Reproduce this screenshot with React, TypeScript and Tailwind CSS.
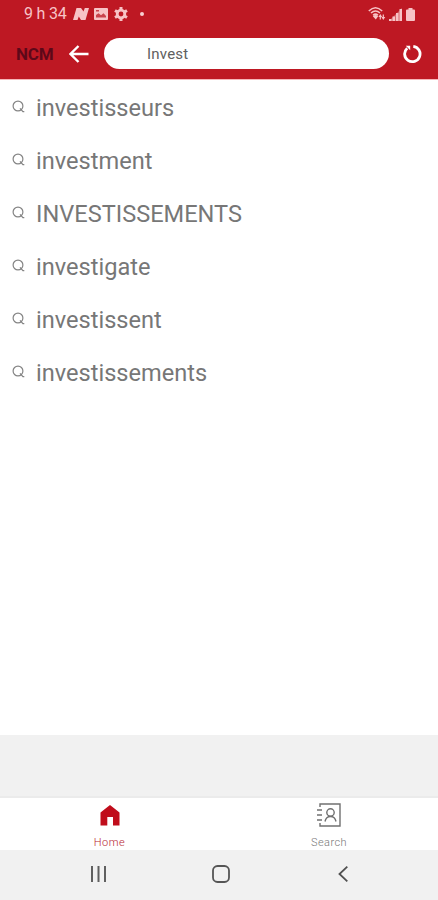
const suggestions = [
  "investisseurs",
  "investment",
  "INVESTISSEMENTS",
  "investigate",
  "investissent",
  "investissements",
];

function StatusBar() {
  return (
    <div className="flex h-7 items-center justify-between pl-6 pr-[23px] text-[#f7c3c6]">
      <div className="flex items-center">
        <span className="w-[49px] whitespace-nowrap text-[16px] leading-7 tracking-[-0.2px]">9 h 34</span>
        <svg className="h-3 w-4" viewBox="0 0 16 12" fill="currentColor">
          <path d="M3.500 0H8l2.500 3.500L11.800 0H16l-3.500 12H8L5.800 8.500 4.500 12H0z" />
        </svg>
        <svg className="ml-[5px] h-3 w-3.5" viewBox="0 0 14 12">
          <rect width="14" height="12" rx="1" fill="currentColor" />
          <path d="M2 9.500V7l2.500-1.800 2.500 2 2.500-2L12 8v1.500z" fill="#c9434c" />
          <rect x="2" y="2" width="3" height="1.500" fill="#c9434c" />
        </svg>
        <svg className="ml-[6px] h-3.5 w-3.5" viewBox="0 0 14 14" fill="none" stroke="currentColor">
          <circle cx="7" cy="7" r="3.800" strokeWidth="2.800" />
          <path d="M7 0v3M7 11v3M1 3.500l2.500 1.500M10.500 9l2.500 1.500M1 10.500L3.500 9M10.500 5L13 3.500" strokeWidth="3" />
        </svg>
        <span className="ml-[12px] h-1 w-1 rounded-full bg-[#f8d0d2]" />
      </div>
      <div className="flex items-center">
        <svg className="h-4 w-[18px]" viewBox="0 0 18 16" fill="none" stroke="currentColor" strokeWidth="1.500">
          <path d="M.800 5Q7.500 -1.500 14.200 5M3 7Q7.500 3 12 7M5 9.200Q7.500 7 10 9.200" />
          <path d="M7.800 13.500L4.800 10.200Q7.500 8 10.200 10.200z" fill="currentColor" stroke="none" />
          <path d="M12.300 8l1.900 3h-3.800zM15.300 14l-1.900-3h3.800z" fill="currentColor" stroke="none" />
          <path d="M12.300 10v3.500M15.300 8.500V12" strokeWidth="1.200" />
        </svg>
        <svg className="ml-[3px] h-[13px] w-[13px]" viewBox="0 0 13 13" fill="currentColor">
          <path d="M0 13L13 0v13z" opacity="0.45" />
          <path d="M0 13V11h2.500v2zM3.500 13V8.500H6V13zM7 13V5h2.500v8zM10.500 13V1H13v12z" />
        </svg>
        <svg className="ml-[4px] h-[13px] w-[9px]" viewBox="0 0 9 13" fill="currentColor">
          <path d="M2.500 0h4v1.500H8q1 0 1 1V12q0 1-1 1H1q-1 0-1-1V2.500q0-1 1-1h1.500z" />
        </svg>
      </div>
    </div>
  );
}

function SearchIcon() {
  return (
    <svg className="h-[13px] w-[13px] shrink-0" viewBox="0 0 13 13" fill="none" stroke="#858585" strokeWidth="1.200">
      <circle cx="6" cy="6" r="4.900" />
      <path d="M8 8.300l2.900 3.400h1.400" />
    </svg>
  );
}

export default function App() {
  return (
    <div className="flex h-[900px] w-[438px] flex-col overflow-hidden bg-white font-['Roboto',sans-serif]">
      <header className="h-20 shrink-0 border-b border-[#f6b5b8] bg-[#be1823]">
        <StatusBar />
        <div className="flex h-[51px] items-center pl-4 pr-[16px]">
          <span className="w-[53px] pt-[2px] text-[17px] font-bold tracking-[-0.2px] text-[#5d0819]">NCM</span>
          <svg className="h-[18px] w-5" viewBox="0 0 20 18" fill="none" stroke="white" strokeWidth="2.400">
            <path d="M19.500 9H1.500M9.500 1L1.500 9l8 8" />
          </svg>
          <div className="ml-[15px] flex h-[31px] w-[285px] items-center rounded-full bg-white pl-[43px] pt-[2px] text-[15px] tracking-[0.2px] text-[#606060]">
            Invest
          </div>
          <svg className="ml-[13px] h-5 w-5 shrink-0" viewBox="0 0 20 20" fill="none" stroke="white">
            <path d="M11.300 2.300A7.700 7.700 0 1 1 5.200 4.200" strokeWidth="2.800" />
            <path d="M3.800 1.800h4.400v4.400z" fill="white" stroke="none" />
          </svg>
        </div>
      </header>

      <ul className="flex-1">
        {suggestions.map((item) => (
          <li key={item} className="flex h-[53px] items-center gap-[11px] pl-3 text-[23.6px] text-[#777]">
            <SearchIcon />
            <span className="pt-1">{item}</span>
          </li>
        ))}
      </ul>

      <div className="h-[63px] shrink-0 border-b-2 border-[#ebebeb] bg-[#f1f1f1]" />

      {/* Tabs */}
      <nav className="flex h-[52px] shrink-0 bg-white text-[11px] font-light leading-[14px]">
        <div className="flex flex-1 flex-col items-center pt-[5px] text-[#b81c30]">
          <svg className="mt-[2px] h-[21px] w-5" viewBox="0 0 20 21">
            <path d="M10 0L19.500 7.500V20.500H13V12H7.300V20.500H.5V7.500z" fill="#c00d1b" />
          </svg>
          <span className="mt-[10px] tracking-[0.5px]">Home</span>
        </div>
        <div className="flex flex-1 flex-col items-center pt-[5px] text-[#777]">
          <svg className="h-6 w-6" viewBox="0 0 24 24" fill="none" stroke="#707070" strokeWidth="1.400">
            <path d="M3 4V1h20v22H3v-3M0 7h5M0 12h5M0 17h5" />
            <circle cx="13.500" cy="9.500" r="3.700" />
            <path d="M8 18.500q1-5 5.500-5t5.500 5" />
          </svg>
          <span className="mt-[9px] pl-px tracking-[0.4px]">Search</span>
        </div>
      </nav>

      {/* System navigation */}
      <div className="flex h-[50px] shrink-0 items-center bg-[#f1f1f1] pb-[2px] pl-[90px]">
        <svg className="h-4 w-4" viewBox="0 0 16 16" fill="none" stroke="#606060" strokeWidth="2">
          <path d="M2 0v16M8.500 0v16M15 0v16" />
        </svg>
        <svg className="ml-[106px] h-[18px] w-[18px]" viewBox="0 0 18 18" fill="none" stroke="#555" strokeWidth="1.800">
          <rect x="1" y="1" width="16" height="16" rx="4.500" />
        </svg>
        <svg className="ml-[108px] h-4 w-[10px]" viewBox="0 0 10 16" fill="none" stroke="#505050" strokeWidth="1.800">
          <path d="M9.300.7L1.500 8l7.800 7.300" />
        </svg>
      </div>
    </div>
  );
}
